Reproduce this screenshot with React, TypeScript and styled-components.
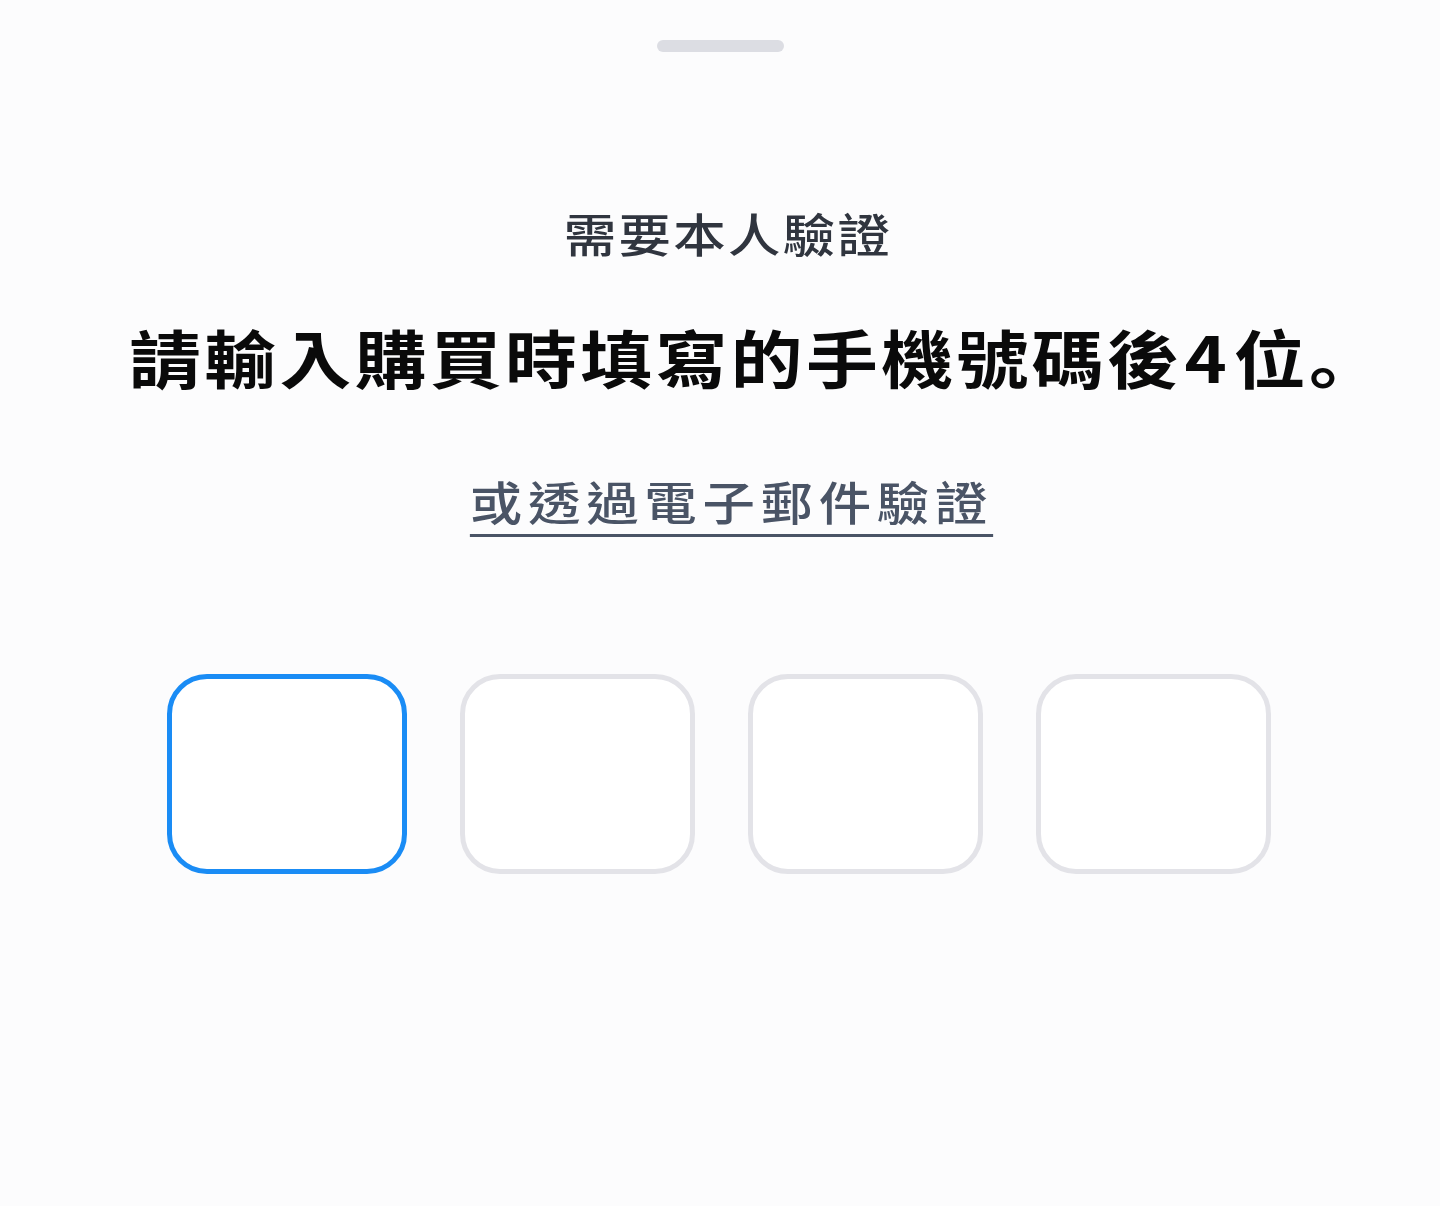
import React from "react";
import styled, { createGlobalStyle } from "styled-components";

const GlobalStyle = createGlobalStyle`
  html, body {
    margin: 0;
    padding: 0;
    background: #fcfcfd;
  }
  body {
    font-family: "Noto Sans CJK TC", "Noto Sans", sans-serif;
  }
`;

const Sheet = styled.div`
  width: 1440px;
  height: 1206px;
  display: flex;
  flex-direction: column;
  align-items: center;
  background: #fcfcfd;
  overflow: hidden;
`;

const Handle = styled.div`
  width: 127px;
  height: 12px;
  margin-top: 40px;
  border-radius: 6px;
  background: #dcdde3;
`;

// the screenshot is slightly stretched wide, so the text is too
const Label = styled.div<{ $shift: number }>`
  display: inline-block;
  line-height: 1;
  white-space: nowrap;
  transform: translateX(${(p) => p.$shift}px) scaleX(1.14);
  transform-origin: center;
`;

const Title = styled(Label)`
  margin-top: 157px;
  font-size: 46px;
  font-weight: 500;
  letter-spacing: 2px;
  color: #30353f;
`;

const Heading = styled(Label)`
  margin-top: 69px;
  font-size: 63px;
  font-weight: 700;
  letter-spacing: 3px;
  color: #0a0a0a;
`;

const Digit = styled.span`
  margin: 0 3px 0 2px;
`;

const Period = styled.span`
  font-family: "Noto Sans CJK JP", sans-serif;
`;

const EmailLink = styled(Label).attrs({ as: "a" })`
  margin-top: 90px;
  font-size: 46px;
  font-weight: 500;
  letter-spacing: 5px;
  color: #4a5466;
  text-decoration: none;
  padding-bottom: 11px;
  border-bottom: 3px solid #4a5466;
  cursor: pointer;
`;

const CodeRow = styled.div`
  display: flex;
  align-items: center;
  gap: 53px;
  margin: 137px 0 0 -2px;
`;

const CodeBox = styled.div<{ $active?: boolean }>`
  width: ${(p) => (p.$active ? 240 : 235)}px;
  height: 200px;
  box-sizing: border-box;
  border-radius: 40px;
  border: 5px solid ${(p) => (p.$active ? "#1a8cf5" : "#e3e3e8")};
  background: #ffffff;
`;

export default function App() {
  return (
    <>
      <GlobalStyle />
      <Sheet>
        <Handle />
        <Title $shift={8}>需要本人驗證</Title>
        <Heading $shift={37}>
          請輸入購買時填寫的手機號碼後<Digit>4</Digit>位<Period>。</Period>
        </Heading>
        <EmailLink $shift={11}>或透過電子郵件驗證</EmailLink>
        <CodeRow>
          <CodeBox $active />
          <CodeBox />
          <CodeBox />
          <CodeBox />
        </CodeRow>
      </Sheet>
    </>
  );
}
